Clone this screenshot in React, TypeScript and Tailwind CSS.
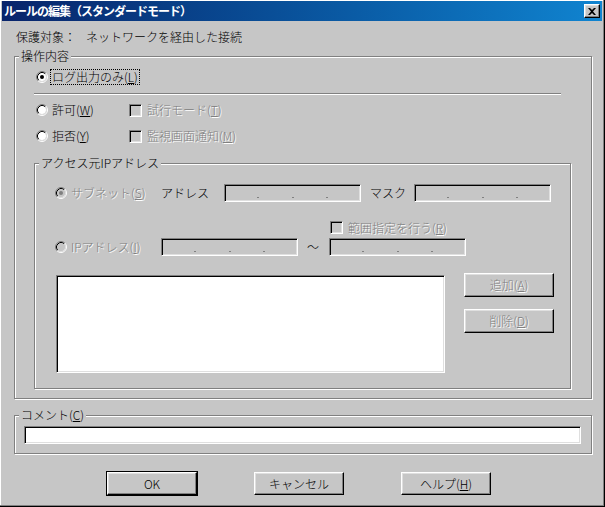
import React from 'react'

const etched = 'border border-[#808080] shadow-[inset_1px_1px_0_#fff,1px_1px_0_#fff]'
const sunken = 'border-t border-l border-[#808080] border-b border-r border-b-white border-r-white shadow-[inset_1px_1px_0_#000,inset_-1px_-1px_0_#dfdfdf]'
const raised = 'border-t border-l border-white border-b border-r border-b-black border-r-black shadow-[inset_-1px_-1px_0_#808080,inset_1px_1px_0_#dfdfdf]'
const disabledText = 'text-[#808080] [text-shadow:1px_1px_0_#fff]'

function Radio({ checked = false, disabled = false }: { checked?: boolean; disabled?: boolean }) {
  return (
    <svg width="12" height="12" viewBox="0 0 12 12" className="shrink-0">
      <circle cx="6" cy="6" r="4" fill={disabled ? '#c6c6c6' : '#fff'} />
      <path d="M2.11 9.89 A5.5 5.5 0 0 1 9.89 2.11" fill="none" stroke="#808080" />
      <path d="M9.89 2.11 A5.5 5.5 0 0 1 2.11 9.89" fill="none" stroke="#fff" />
      <path d="M2.82 9.18 A4.5 4.5 0 0 1 9.18 2.82" fill="none" stroke="#000" />
      <path d="M9.18 2.82 A4.5 4.5 0 0 1 2.82 9.18" fill="none" stroke="#dfdfdf" />
      {checked && <circle cx="6" cy="6" r="2" fill={disabled ? '#808080' : '#000'} />}
    </svg>
  )
}

function Check({ disabled = true }: { disabled?: boolean }) {
  return <div className={`w-[13px] h-[13px] shrink-0 ${sunken} ${disabled ? 'bg-[#c6c6c6]' : 'bg-white'}`} />
}

function IpField({ className = '' }: { className?: string }) {
  return (
    <div className={`w-[137px] h-[18px] bg-[#c6c6c6] ${sunken} flex items-end pb-[3px] ${className}`}>
      <span className="flex-1" />
      <span className="w-[2px] h-[1px] bg-[#808080]" />
      <span className="flex-1" />
      <span className="w-[2px] h-[1px] bg-[#808080]" />
      <span className="flex-1" />
      <span className="w-[2px] h-[1px] bg-[#808080]" />
      <span className="flex-1" />
    </div>
  )
}

function Button({ children, disabled = false, className = '' }: { children: React.ReactNode; disabled?: boolean; className?: string }) {
  return (
    <div className={`w-[90px] bg-[#c6c6c6] ${raised} flex items-center justify-center ${disabled ? disabledText : 'text-black'} ${className}`}>
      {children}
    </div>
  )
}

function Legend({ children }: { children: React.ReactNode }) {
  return (
    <span className="absolute -top-[8px] left-[4px] px-[2px] bg-[#c6c6c6] leading-[14px]">{children}</span>
  )
}

export default function App() {
  return (
    <div className="w-[605px] h-[507px] bg-[#c6c6c6] border-r border-b border-black shadow-[inset_-1px_-1px_0_#808080,inset_1px_1px_0_#fff] pt-[1px] px-[2px] text-[12px] leading-[14px] font-light text-black font-['Noto_Sans_CJK_JP','Noto_Sans_CJK_SC',sans-serif] select-none">
      {/* タイトルバー */}
      <div className="h-[20px] bg-gradient-to-r from-[#08246b] to-[#1084d0] flex items-center pl-[2px] pr-[2px]">
        <span className="text-white font-bold text-[12px] tracking-[-1px]">ルールの編集（スタンダードモード）</span>
        <div className={`ml-auto w-[16px] h-[14px] bg-[#c6c6c6] ${raised} flex items-center justify-center`}>
          <svg width="8" height="7" viewBox="0 0 8 7">
            <path d="M0 0h2l2 2 2-2h2L5 3.5 8 7H6L4 5 2 7H0l3-3.5z" fill="#000" />
          </svg>
        </div>
      </div>

      {/* 保護対象 */}
      <div className="mt-[9px] ml-[14px] h-[14px] flex">
        <span className="w-[70px]">保護対象：</span>
        <span>ネットワークを経由した接続</span>
      </div>

      {/* 操作内容 */}
      <div className={`relative mt-[12px] ml-[12px] w-[578px] h-[343px] ${etched}`}>
        <Legend>操作内容</Legend>

        <div className="mt-[13px] ml-[21px] h-[14px] flex items-center">
          <Radio checked />
          <span className="ml-[3px] px-[1px] outline outline-1 outline-dotted outline-black leading-[14px]">
            ログ出力のみ(<u>L</u>)
          </span>
        </div>

        <div className="mt-[9px] ml-[19px] w-[527px] h-[2px] border-t border-[#808080] border-b border-b-white" />

        <div className="mt-[8px] ml-[21px] h-[14px] flex items-center">
          <div className="w-[93px] flex items-center">
            <Radio />
            <span className="ml-[4px]">許可(<u>W</u>)</span>
          </div>
          <Check />
          <span className={`ml-[5px] ${disabledText}`}>試行モード(<u>T</u>)</span>
        </div>

        <div className="mt-[12px] ml-[21px] h-[14px] flex items-center">
          <div className="w-[93px] flex items-center">
            <Radio />
            <span className="ml-[4px]">拒否(<u>Y</u>)</span>
          </div>
          <Check />
          <span className={`ml-[5px] ${disabledText}`}>監視画面通知(<u>M</u>)</span>
        </div>

        {/* アクセス元IPアドレス */}
        <div className={`relative mt-[20px] ml-[19px] w-[537px] h-[226px] ${etched}`}>
          <Legend>アクセス元IPアドレス</Legend>

          <div className="mt-[20px] ml-[20px] h-[18px] flex items-center">
            <div className="w-[106px] flex items-center">
              <Radio checked disabled />
              <span className={`ml-[4px] ${disabledText}`}>サブネット(<u>S</u>)</span>
            </div>
            <span className="w-[63px]">アドレス</span>
            <IpField />
            <span className="ml-[9px] w-[44px]">マスク</span>
            <IpField />
          </div>

          <div className="mt-[19px] ml-[295px] h-[13px] flex items-center">
            <Check />
            <span className={`ml-[5px] ${disabledText}`}>範囲指定を行う(<u>R</u>)</span>
          </div>

          <div className="mt-[4px] ml-[20px] h-[18px] flex items-center">
            <div className="w-[106px] flex items-center">
              <Radio disabled />
              <span className={`ml-[4px] ${disabledText}`}>IPアドレス(<u>I</u>)</span>
            </div>
            <IpField />
            <span className="w-[31px] pl-[9px]">～</span>
            <IpField />
          </div>

          <div className="mt-[17px] ml-[21px] flex items-start">
            <div className={`mt-[2px] w-[389px] h-[98px] bg-white ${sunken}`} />
            <div className="ml-[19px] flex flex-col gap-[12px]">
              <Button disabled className="h-[24px]">追加(<u>A</u>)</Button>
              <Button disabled className="h-[24px]">削除(<u>D</u>)</Button>
            </div>
          </div>
        </div>
      </div>

      {/* コメント */}
      <div className={`relative mt-[16px] ml-[12px] w-[578px] h-[39px] ${etched}`}>
        <Legend>コメント(<u>C</u>)</Legend>
        <div className={`mt-[10px] ml-[9px] w-[557px] h-[18px] bg-white ${sunken}`} />
      </div>

      {/* ボタン */}
      <div className="mt-[18px] ml-[105px] flex gap-[57px]">
        <Button className="h-[23px] outline outline-1 outline-black">OK</Button>
        <Button className="h-[23px]">キャンセル</Button>
        <Button className="h-[23px]">ヘルプ(<u>H</u>)</Button>
      </div>
    </div>
  )
}
